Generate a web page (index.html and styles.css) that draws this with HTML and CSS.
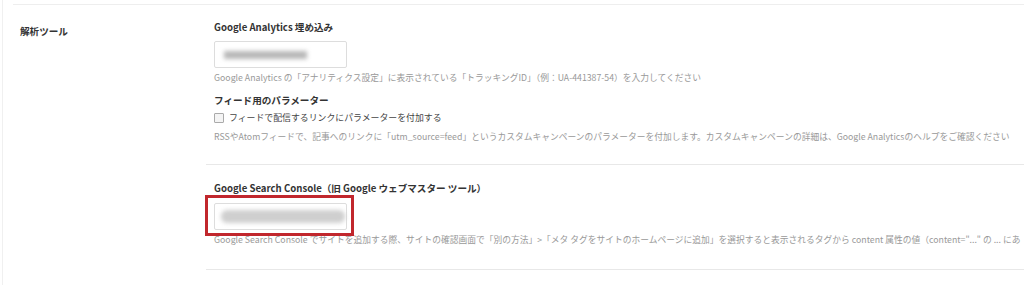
FILE: index.html
```html
<!DOCTYPE html>
<html lang="ja">
<head>
  <meta charset="UTF-8">
  <title>解析ツール</title>
  <link rel="stylesheet" href="styles.css">
</head>
<body>
  <div class="page">
    <div class="prev"></div>

    <div class="row">
      <div class="row-label">解析ツール</div>
      <div class="row-body">

        <div class="group">
          <h4>Google Analytics 埋め込み</h4>
          <div class="input"><span class="blur blur-a"></span></div>
          <p class="desc">Google Analytics の「アナリティクス設定」に表示されている「トラッキングID」（例：UA-441387-54）を入力してください</p>
          <h4 class="sub">フィード用のパラメーター</h4>
          <label class="check"><span class="box"></span>フィードで配信するリンクにパラメーターを付加する</label>
          <p class="desc">RSSやAtomフィードで、記事へのリンクに「utm_source=feed」というカスタムキャンペーンのパラメーターを付加します。カスタムキャンペーンの詳細は、Google Analyticsのヘルプをご確認ください</p>
        </div>

        <div class="group group-sc">
          <h4>Google Search Console（旧 Google ウェブマスター ツール）</h4>
          <div class="input marked"><span class="blur blur-b"></span></div>
          <p class="desc">Google Search Console でサイトを追加する際、サイトの確認画面で「別の方法」&gt;「メタ タグをサイトのホームページに追加」を選択すると表示されるタグから content 属性の値（content="..." の ... にあ</p>
        </div>

      </div>
    </div>
  </div>
</body>
</html>
```

FILE: styles.css
```css
body {
  margin: 0;
  padding: 0;
  background: #fff;
  font-family: "Noto Sans CJK JP", "Open Sans", sans-serif;
  color: #333;
  overflow: hidden;
}

.page {
  margin-left: 2px;
  border-left: 1px solid #f0f0f0;
  min-height: 285px;
}

.prev {
  height: 4px;
  margin-left: 10px;
  border-bottom: 1px solid #eee;
}

.row {
  display: flex;
}

.row-label {
  flex-shrink: 0;
  width: 186px;
  padding: 18px 0 0 17px;
  font-size: 9.6px;
  font-weight: bold;
  line-height: 16px;
  color: #333;
}

.row-body {
  flex-grow: 1;
  min-width: 0;
}

.group {
  padding: 13px 0 19px 8px;
  border-bottom: 1px solid #e8e8e8;
}

.group h4 {
  margin: 0;
  font-size: 9.6px;
  line-height: 18px;
  font-weight: bold;
  color: #333;
}

.group h4.sub {
  margin-top: 5px;
}

.input {
  position: relative;
  width: 131px;
  height: 25px;
  margin-top: 5px;
  border: 1px solid #ddd;
  border-radius: 2px;
  background: #fff;
}

.blur {
  position: absolute;
  display: block;
  background: #b8b8b8;
  filter: blur(2px);
}

.blur-a {
  left: 9px;
  top: 9px;
  width: 83px;
  height: 8px;
}

.blur-b {
  left: 6px;
  top: 6px;
  width: 124px;
  height: 13px;
  border-radius: 6px;
  background: #cfcfcf;
}

.marked::after {
  content: "";
  position: absolute;
  left: -10px;
  top: -9px;
  width: 143px;
  height: 35px;
  border: 3px solid #c1272d;
}

.desc {
  margin: 2px 0 0;
  font-size: 8.75px;
  line-height: 16px;
  color: #999;
  white-space: nowrap;
}

.check {
  display: flex;
  align-items: center;
  font-size: 8.9px;
  line-height: 18px;
  color: #444;
}

.check .box {
  width: 8px;
  height: 8px;
  margin-right: 5px;
  border: 1px solid #aaa;
  border-radius: 1px;
  background: #f4f4f4;
}

.group-sc {
  padding-top: 14px;
  padding-bottom: 21px;
}

.group-sc .input {
  margin-top: 6px;
}
```
